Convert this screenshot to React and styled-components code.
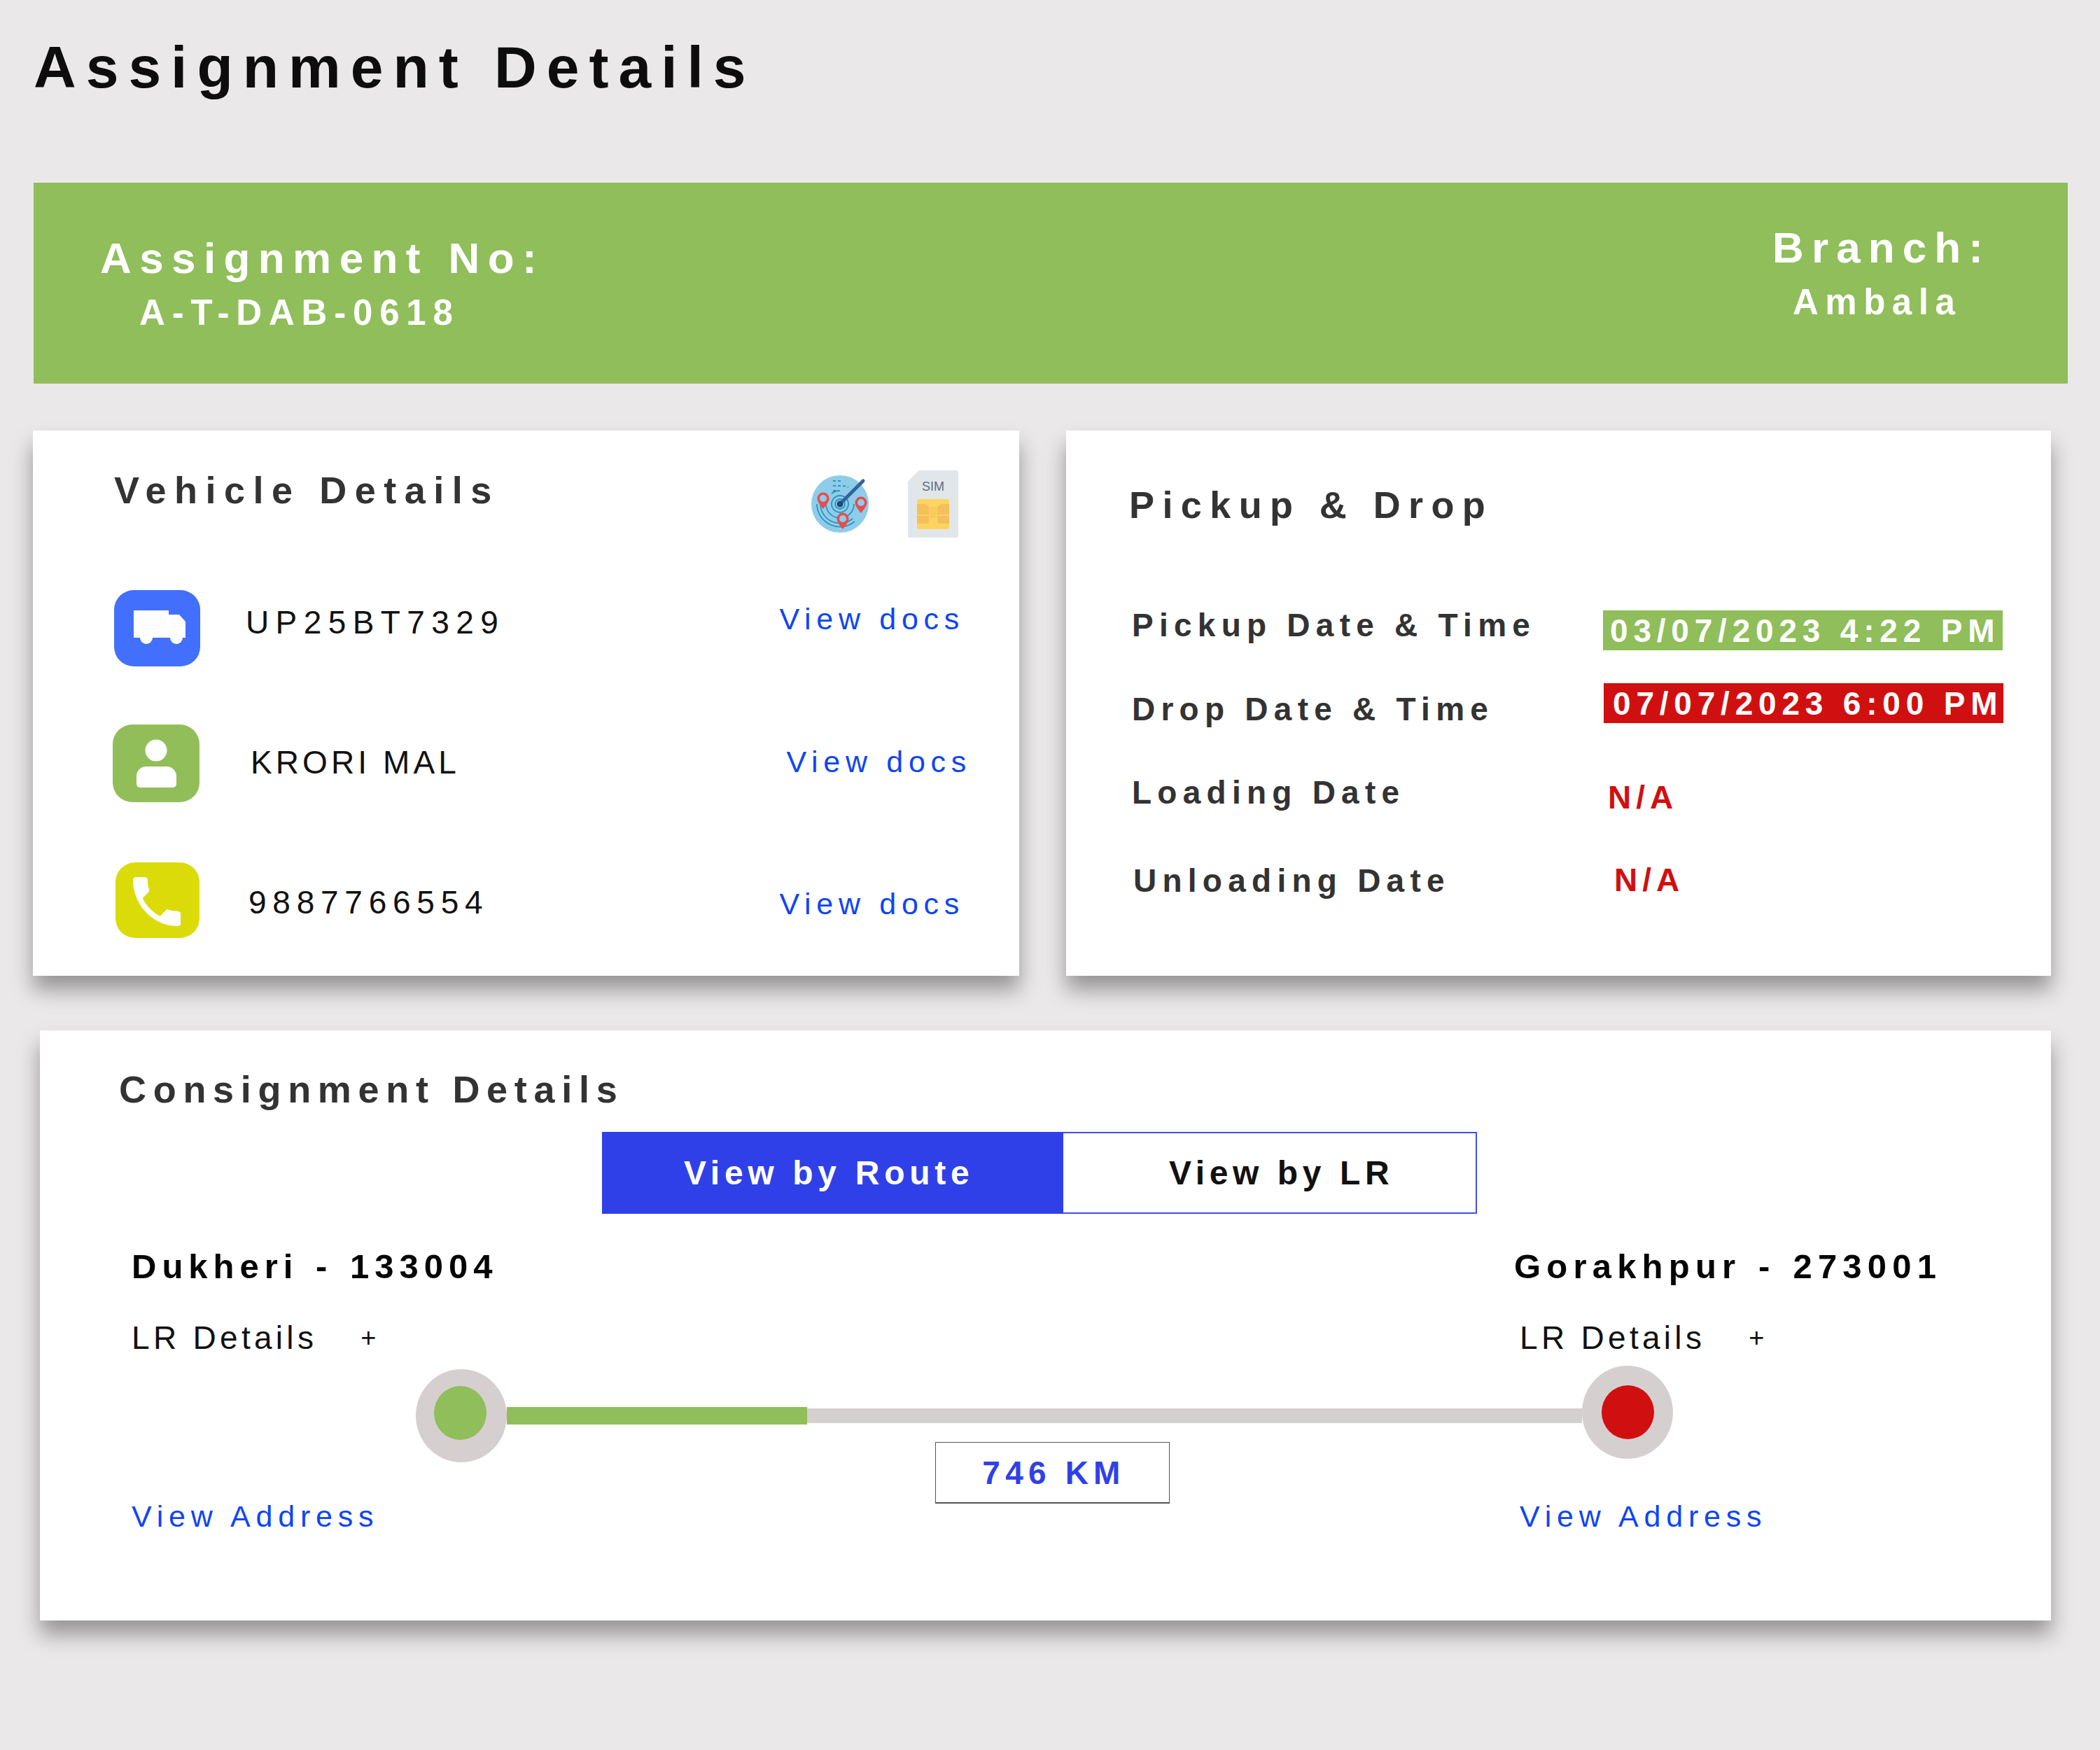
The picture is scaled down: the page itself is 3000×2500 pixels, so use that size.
import React from "react";
import styled, { createGlobalStyle } from "styled-components";

const Global = createGlobalStyle`
  html, body { margin: 0; padding: 0; background: #ebe8e9; }
  * { box-sizing: border-box; }
`;

const Page = styled.div`
  width: 3000px;
  min-height: 2500px;
  padding: 56px 0 0 47px;
  background: #ebe8e9;
  font-family: "Liberation Sans", Arial, sans-serif;
  line-height: 1;
  display: flex;
  flex-direction: column;
  align-items: flex-start;
`;

const PageTitle = styled.h1`
  margin: 0 0 0 1px;
  font-size: 84px;
  font-weight: 700;
  line-height: 81px;
  letter-spacing: 14px;
  color: #0d0d0d;
  white-space: nowrap;
`;

const Banner = styled.section`
  margin: 124px 0 0 1px;
  width: 2906px;
  height: 287px;
  background: #8fbe5a;
  color: #fff;
  display: flex;
  justify-content: space-between;
  align-items: flex-start;
  padding: 0 110px 0 95px;
`;

const BannerBlock = styled.div`
  padding-top: ${(p) => p.$top}px;
  display: flex;
  flex-direction: column;
  align-items: flex-start;
`;

const BannerLabel = styled.div`
  font-size: 62px;
  font-weight: 700;
  line-height: 60px;
  letter-spacing: ${(p) => p.$spacing}px;
  white-space: nowrap;
`;

const BannerValue = styled.div`
  margin: 23px 0 0 ${(p) => p.$indent}px;
  font-size: 51px;
  font-weight: 700;
  line-height: 49px;
  letter-spacing: ${(p) => p.$spacing}px;
  white-space: nowrap;
`;

const TopRow = styled.div`
  margin-top: 67px;
  display: flex;
  gap: 67px;
  align-items: stretch;
`;

const Card = styled.section`
  background: #fff;
  box-shadow: 0 20px 28px rgba(0, 0, 0, 0.36);
`;

const VehicleCard = styled(Card)`
  width: 1409px;
  padding: 57px 0 54px;
`;

const VehicleHeader = styled.header`
  display: flex;
  align-items: flex-start;
  padding: 0 87px 0 116px;
`;

const SectionTitle = styled.h2`
  margin: ${(p) => p.$top || 0}px 0 0;
  font-size: 54px;
  font-weight: 700;
  line-height: 50px;
  letter-spacing: ${(p) => p.$spacing}px;
  color: #333;
  white-space: nowrap;
`;

const HeaderIcons = styled.div`
  margin-left: auto;
  display: flex;
  gap: 56px;
  align-items: center;
`;

const VehicleList = styled.div`
  margin-top: 75px;
`;

const VehicleRow = styled.div`
  display: flex;
  align-items: flex-start;
  margin-top: ${(p) => p.$top}px;
  padding-left: ${(p) => p.$left}px;
  padding-right: ${(p) => p.$right}px;
`;

const Tile = styled.div`
  width: ${(p) => p.$w}px;
  height: ${(p) => p.$h}px;
  flex: none;
  border-radius: 28px;
  background: ${(p) => p.$color};
  svg { display: block; }
`;

const VehicleValue = styled.div`
  margin: ${(p) => p.$top}px 0 0 ${(p) => p.$left}px;
  font-size: 46px;
  line-height: 44px;
  letter-spacing: ${(p) => p.$spacing}px;
  color: #111;
  white-space: nowrap;
`;

const DocsLink = styled.a`
  margin: ${(p) => p.$top}px 0 0 auto;
  font-size: 43px;
  line-height: 41px;
  letter-spacing: 7.7px;
  color: #0f45f5;
  white-space: nowrap;
`;

const PickupCard = styled(Card)`
  width: 1407px;
  padding: 81px 0 0 90px;
`;

const ScheduleGrid = styled.div`
  margin: 125px 0 0 4px;
  display: grid;
  grid-template-columns: 673px auto;
  grid-template-rows: 105px 134px 125px auto;
  justify-content: start;
  align-items: start;
`;

const ScheduleLabel = styled.div`
  margin: ${(p) => p.$top || 0}px 0 0 ${(p) => p.$left || 0}px;
  font-size: 46px;
  font-weight: 700;
  line-height: 44px;
  letter-spacing: 8.25px;
  color: #333;
  white-space: nowrap;
`;

const DateBadge = styled.div`
  margin: ${(p) => p.$top || 0}px 0 0 ${(p) => p.$left || 0}px;
  width: 571px;
  height: 57px;
  display: flex;
  align-items: center;
  padding-left: ${(p) => p.$inset}px;
  background: ${(p) => p.$color};
  color: #fff;
  font-size: 46px;
  font-weight: 700;
  letter-spacing: 7.8px;
  white-space: nowrap;
`;

const MissingDate = styled.div`
  margin: ${(p) => p.$top || 0}px 0 0 ${(p) => p.$left}px;
  font-size: 46px;
  font-weight: 700;
  line-height: 45px;
  letter-spacing: 7px;
  color: #d01010;
`;

const ConsignmentCard = styled(Card)`
  margin: 78px 0 0 10px;
  width: 2873px;
  padding: 59px 0 128px;
`;

const ConsignmentTitle = styled(SectionTitle)`
  margin-left: 113px;
`;

const Segmented = styled.div`
  margin: 36px 0 0 803px;
  width: 1250px;
  height: 117px;
  display: flex;
`;

const Segment = styled.div`
  width: ${(p) => p.$w}px;
  display: flex;
  align-items: center;
  padding-left: ${(p) => p.$pad}px;
  font-size: 48px;
  font-weight: 700;
  letter-spacing: ${(p) => p.$spacing}px;
  white-space: nowrap;
  color: ${(p) => (p.$active ? "#fff" : "#111")};
  background: ${(p) => (p.$active ? "#2f40e8" : "#fff")};
  border: ${(p) => (p.$active ? "0" : "2px solid #3f50e4")};
  border-left: 0;
`;

const StopGrid = styled.div`
  margin-top: ${(p) => p.$top}px;
  padding-left: 131px;
  display: grid;
  grid-template-columns: 1975px auto;
`;

const StopName = styled.div`
  font-size: 49px;
  font-weight: 700;
  line-height: 47px;
  letter-spacing: ${(p) => p.$spacing}px;
  word-spacing: 3px;
  color: #050505;
  white-space: nowrap;
`;

const LrToggle = styled.div`
  margin-left: ${(p) => p.$left || 0}px;
  display: flex;
  align-items: center;
  gap: ${(p) => p.$gap}px;
  font-size: 46px;
  line-height: 44px;
  letter-spacing: 5.3px;
  color: #111;
  white-space: nowrap;
`;

const Plus = styled.span`
  font-size: 38px;
  letter-spacing: 0;
`;

const RouteTrack = styled.div`
  margin-top: 23px;
  padding-left: 537px;
  display: flex;
  align-items: center;
`;

const Node = styled.div`
  width: 130px;
  height: 133px;
  flex: none;
  margin-top: ${(p) => p.$top || 0}px;
  padding-bottom: ${(p) => p.$lift || 0}px;
  padding-right: ${(p) => p.$nudge || 0}px;
  border-radius: 50%;
  background: #d6cfd0;
  display: flex;
  align-items: center;
  justify-content: center;
`;

const NodeCore = styled.div`
  width: 75px;
  height: 77px;
  border-radius: 50%;
  background: ${(p) => p.$color};
`;

const Progress = styled.div`
  height: 25px;
  width: 429px;
  flex: none;
  background: #8fbe5a;
`;

const Rail = styled.div`
  height: 21px;
  width: 1107px;
  flex: none;
  background: #d6cfd0;
`;

const AddressRow = styled.div`
  margin-top: -29px;
  padding-left: 131px;
  height: 127px;
  display: grid;
  grid-template-columns: 1148px 835px auto;
  align-items: end;
`;

const AddressLink = styled.a`
  font-size: 43px;
  line-height: 41px;
  letter-spacing: 7.8px;
  color: #0f45f5;
  white-space: nowrap;
`;

const DistanceBox = styled.div`
  align-self: start;
  width: 335px;
  height: 88px;
  padding-left: 4px;
  border: 2px solid #555;
  border-width: 1px 1px 2px 1px;
  display: flex;
  align-items: center;
  justify-content: center;
  font-size: 46px;
  font-weight: 700;
  letter-spacing: 7.2px;
  color: #2f40e8;
  white-space: nowrap;
`;

const RadarIcon = () => (
  <svg width="82" height="82" viewBox="0 0 82 82" style={{ display: "block" }}>
    <circle cx="41" cy="41" r="41" fill="#8ecde9" />
    <g fill="none" stroke="#2e93bd" strokeWidth="1.8">
      <circle cx="41" cy="41" r="7" />
      <circle cx="41" cy="41" r="12" />
      <path d="M21 41a20 20 0 0 0 40 0" />
      <path d="M13 41a28 28 0 0 0 46 21" />
      <path d="M8 41a33 33 0 0 0 54 25" />
      <path d="M29 26a19 19 0 0 1 12-4" />
      <path d="M31 8h14M31 15h14a26 26 0 0 1 8 2M31 22h4" strokeDasharray="4 3" />
    </g>
    <path d="M42 40L74 8" stroke="#34639a" strokeWidth="5" strokeLinecap="round" />
    <circle cx="41" cy="41" r="4.5" fill="#1f4a7c" />
    {[[17, 33], [71, 39], [45, 62]].map(([x, y]) => (
      <g key={x}>
        <path d={`M${x - 8.5} ${y}a8.5 8.5 0 0 1 17 0c0 5-5 10-8.5 15c-3.5-5-8.5-10-8.5-15z`} fill="#e84c4c" />
        <circle cx={x} cy={y} r="5" fill="#8ecde9" />
      </g>
    ))}
  </svg>
);

const SimIcon = () => (
  <svg width="72" height="96" viewBox="0 0 72 96" style={{ display: "block" }}>
    <path d="M16 0H69a3 3 0 0 1 3 3V93a3 3 0 0 1-3 3H3a3 3 0 0 1-3-3V16Z" fill="#e1e6ea" />
    <text x="36" y="29" textAnchor="middle" fontFamily="Liberation Sans, sans-serif" fontSize="18" fill="#5d6d7e">SIM</text>
    <rect x="13" y="41" width="46" height="43" rx="3" fill="#fdd462" />
    <g fill="#f4c05a">
      <path d="M13 48h12l5 4v11H13zM13 65h17v10l-5 1H13z" />
      <path d="M59 48H47l-5 4v11h17zM59 65H42v10l5 1h12z" />
    </g>
    <rect x="31" y="52" width="10" height="16" fill="#f8cb5e" />
  </svg>
);

const TruckGlyph = () => (
  <svg width="123" height="109" viewBox="0 0 123 109">
    <path d="M28 29H78V35H93L102 45V68H28Z" fill="#fff" />
    <circle cx="46" cy="68" r="9" fill="#fff" />
    <circle cx="89" cy="68" r="9" fill="#fff" />
    <g fill="none" stroke="#eef1ff" strokeWidth="0.8">
      <circle cx="46" cy="68" r="5" />
      <circle cx="89" cy="68" r="5" />
      <path d="M33 50H66M37 56H60M66 35V44M83 40H93L99 47V52H83Z" />
    </g>
  </svg>
);

const PersonGlyph = () => (
  <svg width="124" height="111" viewBox="0 0 124 111">
    <circle cx="62" cy="37" r="15.5" fill="#fff" />
    <path d="M48 60H77A14 14 0 0 1 91 74V85A5 5 0 0 1 86 90H39A5 5 0 0 1 34 85V74A14 14 0 0 1 48 60Z" fill="#fff" />
  </svg>
);

const PhoneGlyph = () => (
  <svg width="120" height="108" viewBox="0 0 120 108">
    <path
      transform="translate(13.7 9.3) scale(3.78 3.89)"
      d="M6.62 10.79c1.44 2.83 3.76 5.14 6.59 6.59l2.2-2.2c.27-.27.67-.36 1.02-.24 1.12.37 2.33.57 3.57.57.55 0 1 .45 1 1V20c0 .55-.45 1-1 1-9.39 0-17-7.61-17-17 0-.55.45-1 1-1h3.5c.55 0 1 .45 1 1 0 1.25.2 2.45.57 3.57.11.35.03.74-.25 1.02l-2.2 2.2z"
      fill="#fff"
    />
  </svg>
);

export default function App() {
  return (
    <Page>
      <Global />
      <PageTitle>Assignment Details</PageTitle>

      <Banner>
        <BannerBlock $top={78}>
          <BannerLabel $spacing={11.4}>Assignment No:</BannerLabel>
          <BannerValue $indent={56} $spacing={9.8}>A-T-DAB-0618</BannerValue>
        </BannerBlock>
        <BannerBlock $top={63}>
          <BannerLabel $spacing={11.1}>Branch:</BannerLabel>
          <BannerValue $indent={29} $spacing={9.5}>Ambala</BannerValue>
        </BannerBlock>
      </Banner>

      <TopRow>
        <VehicleCard>
          <VehicleHeader>
            <SectionTitle $top={3} $spacing={11.5}>Vehicle Details</SectionTitle>
            <HeaderIcons>
              <RadarIcon />
              <SimIcon />
            </HeaderIcons>
          </VehicleHeader>
          <VehicleList>
            <VehicleRow $top={0} $left={116} $right={78}>
              <Tile $w={123} $h={109} $color="#4270fc"><TruckGlyph /></Tile>
              <VehicleValue $top={24} $left={65} $spacing={9.4}>UP25BT7329</VehicleValue>
              <DocsLink $top={21}>View docs</DocsLink>
            </VehicleRow>
            <VehicleRow $top={83} $left={114} $right={68}>
              <Tile $w={124} $h={111} $color="#92be5a"><PersonGlyph /></Tile>
              <VehicleValue $top={32} $left={73} $spacing={5.1}>KRORI MAL</VehicleValue>
              <DocsLink $top={33}>View docs</DocsLink>
            </VehicleRow>
            <VehicleRow $top={86} $left={118} $right={78}>
              <Tile $w={120} $h={108} $color="#dcdb0a"><PhoneGlyph /></Tile>
              <VehicleValue $top={35} $left={70} $spacing={8.75}>9887766554</VehicleValue>
              <DocsLink $top={39}>View docs</DocsLink>
            </VehicleRow>
          </VehicleList>
        </VehicleCard>

        <PickupCard>
          <SectionTitle $spacing={11.4}>Pickup &amp; Drop</SectionTitle>
          <ScheduleGrid>
            <ScheduleLabel>Pickup Date &amp; Time</ScheduleLabel>
            <DateBadge $top={1} $inset={10} $color="#8fbe5a">03/07/2023 4:22 PM</DateBadge>
            <ScheduleLabel $top={15}>Drop Date &amp; Time</ScheduleLabel>
            <DateBadge $left={1} $inset={13} $color="#d01010">07/07/2023 6:00 PM</DateBadge>
            <ScheduleLabel>Loading Date</ScheduleLabel>
            <MissingDate $top={7} $left={7}>N/A</MissingDate>
            <ScheduleLabel $top={1} $left={2}>Unloading Date</ScheduleLabel>
            <MissingDate $left={16}>N/A</MissingDate>
          </ScheduleGrid>
        </PickupCard>
      </TopRow>

      <ConsignmentCard>
        <ConsignmentTitle $spacing={9.7}>Consignment Details</ConsignmentTitle>
        <Segmented>
          <Segment $active $w={659} $pad={117} $spacing={6.7}>View by Route</Segment>
          <Segment $w={591} $pad={151} $spacing={6.6}>View by LR</Segment>
        </Segmented>
        <StopGrid $top={52}>
          <StopName $spacing={8}>Dukheri - 133004</StopName>
          <StopName $spacing={8.2}>Gorakhpur - 273001</StopName>
        </StopGrid>
        <StopGrid $top={56}>
          <LrToggle $gap={62}>LR Details<Plus>+</Plus></LrToggle>
          <LrToggle $left={8} $gap={62}>LR Details<Plus>+</Plus></LrToggle>
        </StopGrid>
        <RouteTrack>
          <Node $lift={8} $nudge={4}><NodeCore $color="#8fbe5a" /></Node>
          <Progress />
          <Rail />
          <Node $top={-10}><NodeCore $color="#d01010" /></Node>
        </RouteTrack>
        <AddressRow>
          <AddressLink>View Address</AddressLink>
          <DistanceBox>746 KM</DistanceBox>
          <AddressLink>View Address</AddressLink>
        </AddressRow>
      </ConsignmentCard>
    </Page>
  );
}
